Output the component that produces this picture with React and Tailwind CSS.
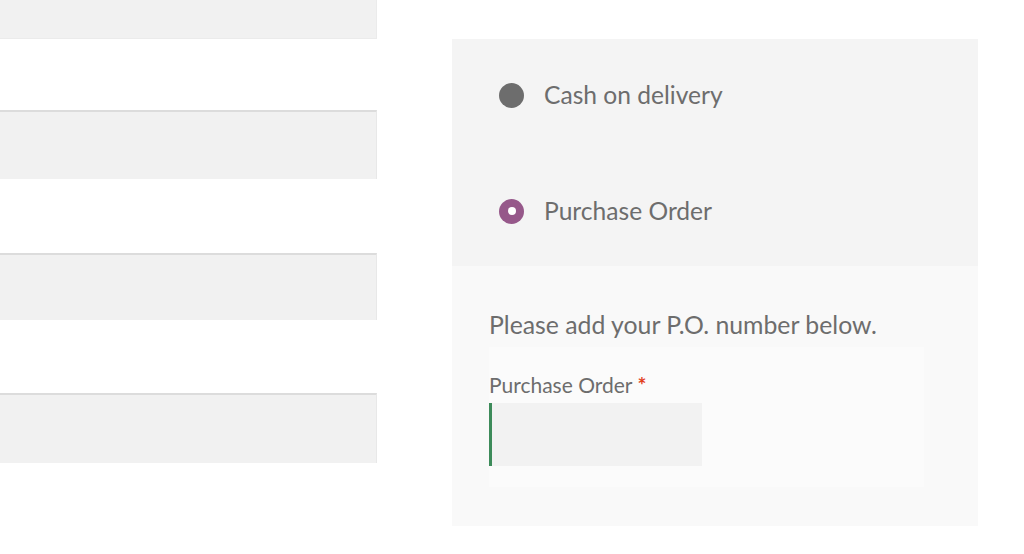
export default function App() {
  const font = { fontFamily: '"Lato", "Liberation Sans", sans-serif' };
  return (
    <div className="w-[1024px] h-[554px] bg-white flex overflow-hidden" style={font}>
      {/* left column: empty fields */}
      <div className="w-[377px] shrink-0 flex flex-col">
        <div className="h-[39px] bg-[#f1f1f1] border-b border-r border-[#ebebeb]"></div>
        <div className="mt-[71px] h-[69px] bg-[#f1f1f1] border-t-2 border-t-[#dcdcdc] border-r border-r-[#e8e8e8]"></div>
        <div className="mt-[74px] h-[67px] bg-[#f1f1f1] border-t-2 border-t-[#dcdcdc] border-r border-r-[#e8e8e8]"></div>
        <div className="mt-[73px] h-[70px] bg-[#f1f1f1] border-t-2 border-t-[#dcdcdc] border-r border-r-[#e8e8e8]"></div>
      </div>

      {/* payment methods */}
      <div className="ml-[75px] mt-[39px] w-[526px] h-[487px] flex flex-col text-[#6d6d6d]">
        <ul className="bg-[#f4f4f4] h-[227px] pl-[47px] pt-[43px] flex flex-col gap-[90px]">
          <li className="flex items-center gap-[20px] h-[26px]">
            <span className="w-[25px] h-[25px] rounded-full bg-[#6d6d6d]"></span>
            <span className="text-[24.6px] leading-none">Cash on delivery</span>
          </li>
          <li className="flex items-center gap-[20px] h-[26px]">
            <span className="w-[25px] h-[25px] rounded-full bg-[#96588a] flex items-center justify-center">
              <span className="w-[8px] h-[8px] rounded-full bg-white"></span>
            </span>
            <span className="text-[24.6px] leading-none">Purchase Order</span>
          </li>
        </ul>
        <div className="flex-1 bg-[#f9f9f9] pl-[37px] pt-[44px]">
          <p className="text-[24.8px] leading-[30px]">Please add your P.O. number below.</p>
          <div className="mt-[7px] w-[435px] h-[140px] bg-[#fbfbfb] pt-[26px]">
            <label className="block text-[21px] leading-[23px]">
              Purchase Order <span className="text-[#e2401c] font-bold">*</span>
            </label>
            <div className="mt-[7px] w-[213px] h-[63px] bg-[#f2f2f2] border-l-[3px] border-[#3d8b5a]"></div>
          </div>
        </div>
      </div>
    </div>
  );
}
